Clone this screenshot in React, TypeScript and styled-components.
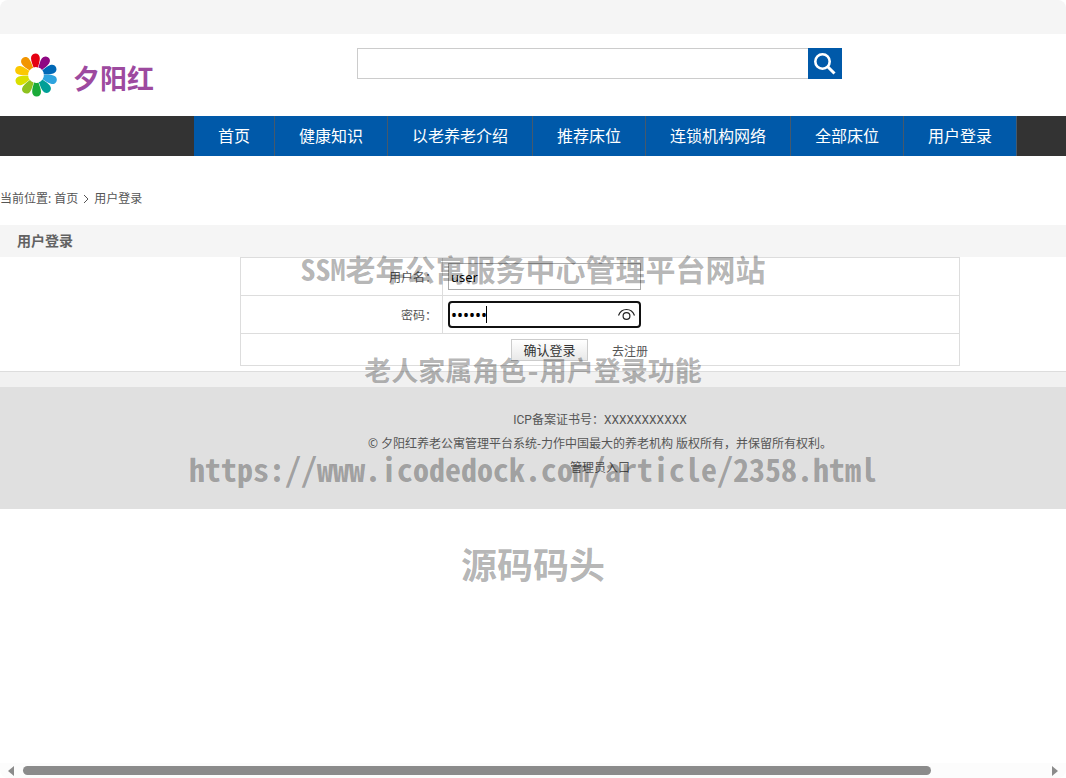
import React, { useState } from "react";
import styled, { createGlobalStyle } from "styled-components";

const GlobalStyle = createGlobalStyle`
  * { box-sizing: border-box; }
  body {
    margin: 0;
    background: #fff;
    color: #555;
    font: 12px/24px "Noto Sans", "Noto Sans CJK SC", sans-serif;
  }
  a { color: inherit; text-decoration: none; }
`;

const Shell = styled.div`
  position: relative;
  display: flex;
  flex-direction: column;
  min-height: 100vh;
  overflow: hidden;
  border-radius: 8px;
`;

const Viewport = styled.div`
  flex: 1;
  overflow: hidden;
`;

const Page = styled.div`
  min-width: 1200px;
`;

const TopBar = styled.div`
  height: 34px;
  background: #f5f5f5;
`;

const Header = styled.header`
  display: grid;
  grid-template-columns: 344px 485px;
  align-items: start;
  height: 82px;
  padding: 14px 13px 0;
`;

const Logo = styled.a`
  display: flex;
  align-items: center;
  gap: 14px;
  color: #9d4a9f;
  font: bold 27px/44px "Noto Sans CJK SC", sans-serif;

  svg { display: block; }
  span { padding-top: 6px; }
`;

const Search = styled.form`
  display: flex;
  height: 31px;
`;

const SearchInput = styled.input`
  flex: 1;
  min-width: 0;
  border: 1px solid #ccc;
  border-right: 0;
  padding: 0 8px;
  background: #fff;
  outline: none;
`;

const SearchButton = styled.button`
  display: grid;
  place-items: center;
  width: 34px;
  border: 0;
  padding: 0;
  background: #0059a9;
`;

const Nav = styled.nav`
  display: flex;
  height: 40px;
  padding-left: 194px;
  background: #333;
`;

const NavLink = styled.a`
  padding: 0 24px;
  border-right: 1px solid #45596c;
  background: #0059a9;
  color: #fff;
  font-size: 16px;
  line-height: 41px;
`;

const Breadcrumb = styled.div`
  display: flex;
  align-items: center;
  gap: 5px;
  height: 69px;
  padding-top: 17px;
`;

const Title = styled.h1`
  margin: 0;
  padding-left: 17px;
  background: #f5f5f5;
  color: #626262;
  font-size: 14px;
  font-weight: 600;
  line-height: 32px;
`;

const FormTable = styled.table`
  width: 720px;
  margin: 0 auto 5px;
  border-collapse: collapse;

  th, td {
    height: 38px;
    border: 1px solid #ddd;
    padding: 0 5px;
    text-align: left;
    font-weight: normal;
  }
  th {
    width: 202px;
    padding-top: 2px;
    text-align: right;
  }
  tr:last-child td { height: 32px; }
`;

const Field = styled.div`
  position: relative;
  display: flex;
  width: 193px;
  height: 27px;
`;

const TextInput = styled.input<{ $focused?: boolean }>`
  width: 100%;
  border: ${(p) => (p.$focused ? "2px solid #111" : "1px solid #aaa")};
  border-radius: ${(p) => (p.$focused ? "4px" : "0")};
  padding: 0 ${(p) => (p.$focused ? "1px" : "2px")};
  background: #fff;
  color: #000;
  font: ${(p) => (p.$focused ? 16 : 13)}px "Noto Sans", sans-serif;
  outline: none;
`;

const Caret = styled.span`
  position: absolute;
  left: 38px;
  top: 5px;
  width: 1px;
  height: 17px;
  background: #000;
`;

const RevealButton = styled.button`
  position: absolute;
  right: 5px;
  top: 5px;
  border: 0;
  padding: 0;
  background: none;

  svg { display: block; }
`;

const Actions = styled.div`
  display: flex;
  justify-content: center;
  align-items: flex-start;
  gap: 24px;
  padding: 3px 41px 0 0;

  a { padding-top: 1px; }
`;

const SubmitButton = styled.button`
  width: 77px;
  height: 22px;
  border: 1px solid #ccc;
  padding: 0;
  background: linear-gradient(#fff, #e8e8e8);
  color: #333;
  font: 13px/20px "Noto Sans CJK SC", sans-serif;
`;

const Divider = styled.div`
  height: 16px;
  border-top: 1px solid #ddd;
  background: #f1f1f1;
`;

const Footer = styled.footer`
  height: 122px;
  padding-top: 21px;
  background: #e0e0e0;
  text-align: center;

  p { margin: 0; }
`;

const License = styled.p`
  font-family: Roboto, "Noto Sans CJK SC", sans-serif;
`;

const Watermark = styled.div<{ $top: number; $size: number }>`
  position: absolute;
  top: ${(p) => p.$top}px;
  left: 0;
  right: 0;
  color: rgba(0, 0, 0, 0.3);
  font: bold ${(p) => p.$size}px/40px "Noto Sans Mono CJK SC", "Noto Sans CJK SC", monospace;
  text-align: center;
  white-space: nowrap;
  pointer-events: none;
`;

const ScrollBar = styled.div`
  display: flex;
  align-items: center;
  gap: 9px;
  height: 15px;
  padding: 0 8px;
  background: #fcfcfc;
`;

const ScrollArrow = styled.button`
  border: 0;
  padding: 0;
  background: none;

  svg { display: block; }
`;

const ScrollTrack = styled.div`
  flex: 1;
`;

const ScrollThumb = styled.div`
  width: 89%;
  height: 9px;
  border-radius: 5px;
  background: #8b8b8b;
`;

const petals = [
  "#e50012", "#8f0783", "#0068b6", "#2ea4df", "#009f97",
  "#1aab39", "#8ec21f", "#d9df00", "#fcc800", "#f29500",
];

const links = ["首页", "健康知识", "以老养老介绍", "推荐床位", "连锁机构网络", "全部床位", "用户登录"];

const watermarks = [
  { text: "SSM老年公寓服务中心管理平台网站", top: 248, size: 30 },
  { text: "老人家属角色-用户登录功能", top: 350, size: 27 },
  { text: "https://www.icodedock.com/article/2358.html", top: 448, size: 32 },
  { text: "源码码头", top: 543, size: 36 },
];

export default function App() {
  const [user, setUser] = useState("user");
  const [password, setPassword] = useState("123456");
  const [shown, setShown] = useState(false);

  return (
    <Shell>
      <GlobalStyle />
      <Viewport>
        <Page>
          <TopBar />
          <Header>
            <Logo href="#">
              <svg width="46" height="54" viewBox="-22 -27 44 54" aria-hidden="true">
                {petals.map((color, i) => (
                  <path
                    key={color}
                    d="M-2.2-7.5C-3.2-11-4.4-13.5-4.4-16.8C-4.4-19.6-2.6-21.5 0-21.5C2.6-21.5 4.4-19.6 4.4-16.8C4.4-13.5 3.2-11 2.2-7.5Q0-8.4-2.2-7.5Z"
                    fill={color}
                    transform={`rotate(${i * 36 - 2})`}
                  />
                ))}
              </svg>
              <span>夕阳红</span>
            </Logo>
            <Search onSubmit={(e) => e.preventDefault()}>
              <SearchInput type="text" aria-label="搜索" />
              <SearchButton type="submit" aria-label="搜索">
                <svg width="24" height="24" viewBox="0 0 24 24" fill="none" stroke="#fff">
                  <circle cx="9.5" cy="9.5" r="7.2" strokeWidth="2.6" />
                  <path d="M14.5 14.5L21.5 21.5" strokeWidth="3" />
                </svg>
              </SearchButton>
            </Search>
          </Header>
          <Nav>
            {links.map((label) => (
              <NavLink key={label} href="#">{label}</NavLink>
            ))}
          </Nav>
          <Breadcrumb>
            <span>当前位置: <a href="#">首页</a></span>
            <svg width="6" height="10" viewBox="0 0 6 10" fill="none" stroke="#555" aria-hidden="true">
              <path d="M1 1L5 5L1 9" />
            </svg>
            <a href="#">用户登录</a>
          </Breadcrumb>
          <Title>用户登录</Title>
          <form onSubmit={(e) => e.preventDefault()}>
            <FormTable>
              <tbody>
                <tr>
                  <th scope="row"><label htmlFor="user">用户名：</label></th>
                  <td>
                    <Field>
                      <TextInput id="user" type="text" value={user} onChange={(e) => setUser(e.target.value)} />
                    </Field>
                  </td>
                </tr>
                <tr>
                  <th scope="row"><label htmlFor="password">密码：</label></th>
                  <td>
                    <Field>
                      <TextInput
                        id="password"
                        $focused
                        type={shown ? "text" : "password"}
                        value={password}
                        onChange={(e) => setPassword(e.target.value)}
                      />
                      <Caret />
                      <RevealButton type="button" aria-label="显示密码" onClick={() => setShown(!shown)}>
                        <svg width="19" height="16" viewBox="0 0 19 16" fill="none" stroke="#222" strokeWidth="1.2">
                          <path d="M1.5 9.5C3 5.5 6 3.5 9.5 3.5S16 5.5 17.5 9.5" />
                          <circle cx="9.5" cy="10" r="3.4" />
                        </svg>
                      </RevealButton>
                    </Field>
                  </td>
                </tr>
                <tr>
                  <td colSpan={2}>
                    <Actions>
                      <SubmitButton type="submit">确认登录</SubmitButton>
                      <a href="#">去注册</a>
                    </Actions>
                  </td>
                </tr>
              </tbody>
            </FormTable>
          </form>
          <Divider />
          <Footer>
            <License>ICP备案证书号：XXXXXXXXXXX</License>
            <p>© 夕阳红养老公寓管理平台系统-力作中国最大的养老机构 版权所有，并保留所有权利。</p>
            <p><a href="#">管理员入口</a></p>
          </Footer>
        </Page>
      </Viewport>
      {watermarks.map((w) => (
        <Watermark key={w.text} $top={w.top} $size={w.size}>{w.text}</Watermark>
      ))}
      <ScrollBar>
        <ScrollArrow type="button" aria-label="向左滚动">
          <svg width="6" height="10" viewBox="0 0 6 10"><path d="M6 0V10L0 5Z" fill="#8b8b8b" /></svg>
        </ScrollArrow>
        <ScrollTrack><ScrollThumb /></ScrollTrack>
        <ScrollArrow type="button" aria-label="向右滚动">
          <svg width="6" height="10" viewBox="0 0 6 10"><path d="M0 0V10L6 5Z" fill="#8b8b8b" /></svg>
        </ScrollArrow>
      </ScrollBar>
    </Shell>
  );
}
